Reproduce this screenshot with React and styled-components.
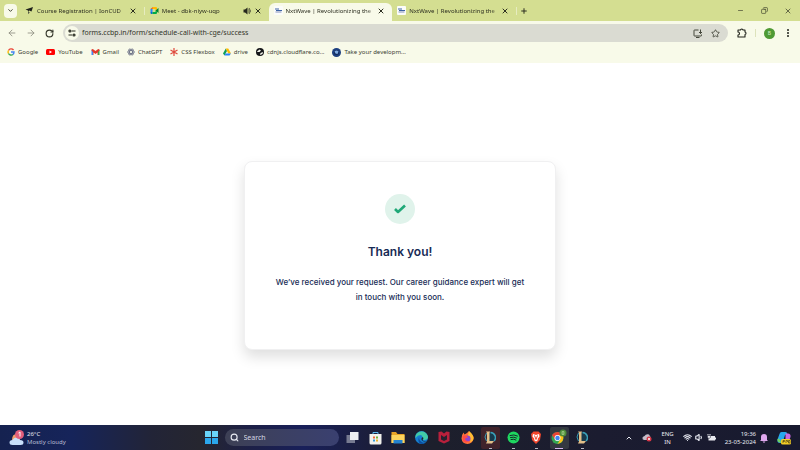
import React from "react";
import styled, { createGlobalStyle } from "styled-components";
import { ArrowLeft, ArrowRight, RotateCw, Star, X, Plus, Minus, ChevronDown, ChevronUp, Search, Wifi, Volume1, Copy } from "lucide-react";

const GlobalStyle = createGlobalStyle`
  * { box-sizing: border-box; }
  html, body { margin: 0; }
  body { font-family: "Noto Sans", "Open Sans", sans-serif; background: #fff; }
  button, input { font: inherit; color: inherit; border: 0; padding: 0; margin: 0; background: none; outline: none; }
  a { color: inherit; text-decoration: none; }
  svg { display: block; flex: none; }
`;

const Screen = styled.div`
  min-height: 100vh;
  display: flex;
  flex-direction: column;
`;

const TabStrip = styled.header`
  height: 21px;
  display: flex;
  align-items: center;
  background: #d4de91;
  color: #2c2e20;
  padding: 0 4px;
`;

const TabSearch = styled.button`
  flex: none;
  width: 13px;
  height: 14px;
  border-radius: 4px;
  background: #f8fae9;
  display: grid;
  place-items: center;
  margin-right: 3px;
`;

const Tabs = styled.nav`
  display: flex;
  flex: 0 1 496px;
  min-width: 0;
  align-self: stretch;
`;

const Tab = styled.div`
  flex: 1 1 0;
  min-width: 0;
  display: flex;
  align-items: center;
  gap: 3px;
  padding: 0 7px 0 5px;
  margin-top: ${(p) => (p.$active ? "3px" : "0")};
  padding-bottom: ${(p) => (p.$active ? "3px" : "0")};
  border-radius: ${(p) => (p.$active ? "6px 6px 0 0" : "0")};
  background: ${(p) => (p.$active ? "#f8fae9" : "transparent")};
`;

const TabTitle = styled.button`
  flex: 1;
  min-width: 0;
  text-align: left;
  font-size: 6px;
  line-height: 12px;
  white-space: nowrap;
  overflow: hidden;
  mask-image: linear-gradient(to right, #000 92%, transparent);
`;

const IconButton = styled.button`
  flex: none;
  display: grid;
  place-items: center;
  width: ${(p) => p.$w || 8}px;
  height: 14px;
  color: ${(p) => p.$color || "inherit"};
`;

const Divider = styled.span`
  flex: none;
  align-self: center;
  width: 1px;
  height: 8px;
  background: ${(p) => p.$color || "#e6ecc0"};
`;

const WindowControls = styled.div`
  margin-left: auto;
  display: flex;
  gap: 16px;
  padding-right: 4px;
`;

const Toolbar = styled.div`
  height: 22px;
  padding: 2px 7px 0 7px;
  display: flex;
  align-items: center;
  background: #f8fae9;
  color: #333529;
`;

const NavButtons = styled.div`
  display: flex;
  gap: 10px;
  margin-right: 9px;
`;

const Address = styled.label`
  flex: 1;
  min-width: 0;
  height: 18px;
  border-radius: 9px;
  background: #dadbd2;
  display: flex;
  align-items: center;
  gap: 3px;
  padding: 0 6px 0 2px;
`;

const SiteInfo = styled.span`
  width: 14px;
  height: 14px;
  border-radius: 50%;
  background: #f8fae9;
  display: grid;
  place-items: center;
`;

const AddressInput = styled.input`
  flex: 1;
  min-width: 0;
  font-size: 7px;
  line-height: 14px;
`;

const ToolbarEnd = styled.div`
  display: flex;
  align-items: center;
  gap: 8px;
  margin-left: 9px;
`;

const Avatar = styled.button`
  width: 11px;
  height: 11px;
  border-radius: 50%;
  background: #4f9a35;
  color: #dcefc9;
  font-size: 5px;
  line-height: 11px;
  text-align: center;
`;

const Bookmarks = styled.nav`
  height: 20px;
  padding: 0 7px 2px;
  display: flex;
  align-items: center;
  gap: 8px;
  background: #f8fae9;
  color: #3b3d33;
`;

const Bookmark = styled.a`
  display: flex;
  align-items: center;
  gap: 3px;
  font-size: 6px;
  line-height: 12px;
  white-space: nowrap;
`;

const Page = styled.main`
  flex: 1;
  display: flex;
  align-items: center;
  justify-content: center;
  padding: 24px;
  background: #fff;
`;

const Card = styled.section`
  width: 312px;
  max-width: 100%;
  margin-top: 22px;
  padding: 32px 28px 44px;
  border: 1px solid #f0f0f1;
  border-radius: 8px;
  background: #fff;
  box-shadow: 0 7px 14px rgba(0, 0, 0, 0.13);
  display: flex;
  flex-direction: column;
  align-items: center;
  text-align: center;
  color: #172b55;
`;

const CheckBadge = styled.div`
  width: 30px;
  height: 30px;
  border-radius: 50%;
  background: #e0f3eb;
  display: grid;
  place-items: center;
`;

const Heading = styled.h1`
  margin: 18px 0 13px;
  font: 600 12px/20px Inter, sans-serif;
`;

const Message = styled.p`
  margin: 0;
  font: 500 8px/15px Inter, sans-serif;
`;

const Taskbar = styled.footer`
  height: 25px;
  display: grid;
  grid-template-columns: 1fr auto 1fr;
  align-items: center;
  padding: 0 9px;
  color: #e8eaf2;
  background: linear-gradient(to right, #152250 0, #16245a 9%, #222437 19%, #26262f 25%, #1d2046 31%, #19205a 38%, #1b1e3c 46%, #1d1f2c 54%, #1b1c30 75%, #181a2f 100%);
`;

const Weather = styled.button`
  justify-self: start;
  display: flex;
  align-items: center;
  gap: 3px;
  text-align: left;
  font-size: 6px;
  line-height: 8px;
`;

const WeatherText = styled.span`
  display: flex;
  flex-direction: column;
`;

const Dim = styled.span`
  color: #b7bdd2;
`;

const Apps = styled.div`
  display: flex;
  align-items: center;
  gap: 4px;
  margin-right: 7px;
`;

const SearchBox = styled.label`
  width: 114px;
  height: 17px;
  border-radius: 9px;
  background: linear-gradient(to right, #3d4055, #3a4070);
  display: flex;
  align-items: center;
  gap: 5px;
  padding: 0 5px;
`;

const SearchInput = styled.input`
  flex: 1;
  min-width: 0;
  font-size: 7px;
  line-height: 12px;
  &::placeholder { color: #d3d6e2; opacity: 1; }
`;

const AppButton = styled.button`
  width: 19px;
  height: 22px;
  border-radius: 2px;
  display: grid;
  place-items: center;
  position: relative;
  background: ${(p) => p.$tint || "transparent"};
  &::after {
    content: "";
    display: ${(p) => (p.$run ? "block" : "none")};
    position: absolute;
    bottom: 0;
    left: 50%;
    margin-left: calc(${(p) => p.$run || 0}px / -2);
    width: ${(p) => p.$run || 0}px;
    height: 1px;
    background: ${(p) => (p.$run > 4 ? "#d6b8ee" : "#b8b8c2")};
  }
`;

const Tray = styled.div`
  justify-self: end;
  display: flex;
  align-items: center;
  gap: 9px;
  font-size: 6px;
  line-height: 8px;
`;

const TrayGroup = styled.div`
  display: flex;
  align-items: center;
  gap: 4px;
`;

const TrayButton = styled.button`
  display: flex;
  align-items: center;
  gap: 3px;
`;

const TrayText = styled.button`
  display: flex;
  flex-direction: column;
  align-items: ${(p) => p.$align || "center"};
`;

const GradCap = () => (
  <svg width="9" height="9" viewBox="0 0 18 18"><path d="M1 7 16 2 13 11 8 9 6 13 6 9Z" fill="#20221c" /><path d="M6 12v4l4-3" fill="#45483c" /></svg>
);
const Meet = () => (
  <svg width="9" height="9" viewBox="0 0 18 18"><path d="M1 6 6 2v4Z" fill="#e94235" /><path d="M1 6h4v6H1Z" fill="#2684fc" /><path d="M1 12h4v4H3q-2 0-2-2Z" fill="#0066da" /><path d="M5 2h7q2 0 2 2v3l-3 2V6H5Z" fill="#ffba00" /><path d="M5 12h6V9l3 2v3q0 2-2 2H5Z" fill="#00ac47" /><path d="m11 9 6-5v10Z" fill="#00832d" /></svg>
);
const Nxt = () => (
  <svg width="9" height="9" viewBox="0 0 18 18"><rect width="18" height="18" rx="2" fill="#fbfcfa" /><path d="M2 6h8M4 9h12" stroke="#3d64a6" strokeWidth="2" /><path d="M3 12h12" stroke="#8390bb" strokeWidth="2" /></svg>
);
const Sound = () => (
  <svg width="8" height="8" viewBox="0 0 16 16"><path d="M1 5h3l5-4v14l-5-4H1Z" fill="#25271c" /><path d="M11 5q3 3 0 6m1-9q6 6 0 12" fill="none" stroke="#25271c" strokeWidth="1.500" /></svg>
);
const Tune = () => (
  <svg width="8" height="8" viewBox="0 0 16 16" fill="none" stroke="#26281f" strokeWidth="2.400"><circle cx="4" cy="4" r="2" /><path d="M8 4h7M1 12h7" /><circle cx="12" cy="12" r="2" /></svg>
);
const Install = () => (
  <svg width="10" height="9" viewBox="0 0 20 18" fill="none" stroke="#333529" strokeWidth="1.800"><path d="M11 2H3q-1 0-1 1v10q0 1 1 1h13q1 0 1-1v-2M6 17h7M15 1v8m-3-3 3 3 3-3" /></svg>
);
const Puzzle = () => (
  <svg width="10" height="10" viewBox="0 0 20 20" fill="none" stroke="#20221b" strokeWidth="2.200"><path d="M2 4h5q0-2 2.500-2T12 4h4v4q2 0 2 2.500T16 13v5H2v-4q3 0 3-3T2 8Z" strokeLinejoin="round" /></svg>
);
const Dots = () => (
  <svg width="4" height="10" viewBox="0 0 4 10" fill="#20221b"><circle cx="2" cy="2" r="1" /><circle cx="2" cy="5" r="1" /><circle cx="2" cy="8" r="1" /></svg>
);
const GoogleG = () => (
  <svg width="8" height="8" viewBox="0 0 16 16" fill="none" strokeWidth="2.800"><path d="M13 4A6 6 0 0 0 3 5" stroke="#ea4335" /><path d="M3 5a6 6 0 0 0 0 6" stroke="#fbbc05" /><path d="M3 11a6 6 0 0 0 9 2" stroke="#34a853" /><path d="M8 8h6q0 3-2 5" stroke="#4285f4" /></svg>
);
const YouTube = () => (
  <svg width="9" height="8" viewBox="0 0 18 16"><rect y="2" width="18" height="12" rx="3" fill="#f00" /><path d="m7 5 5 3-5 3Z" fill="#fff" /></svg>
);
const Gmail = () => (
  <svg width="9" height="8" viewBox="0 0 18 16"><path d="M1 4h3v10H1Z" fill="#4285f4" /><path d="M14 4h3v10h-3Z" fill="#34a853" /><path d="M1 3q2-2 4 0l4 3 4-3q2-2 4 0v2l-3 3v6h-1V9l-4 3-4-3v5H4V8L1 5Z" fill="#e2382d" /></svg>
);
const Gpt = () => (
  <svg width="8" height="8" viewBox="0 0 16 16" fill="none" stroke="#62677f" strokeWidth="1.500"><ellipse cx="8" cy="8" rx="7" ry="3" /><ellipse cx="8" cy="8" rx="7" ry="3" transform="rotate(60 8 8)" /><ellipse cx="8" cy="8" rx="7" ry="3" transform="rotate(120 8 8)" /></svg>
);
const Asterisk = () => (
  <svg width="8" height="8" viewBox="0 0 16 16" stroke="#df4a3e" strokeWidth="2.400"><path d="M8 0v16M1 4l14 8M1 12l14-8" /></svg>
);
const Drive = () => (
  <svg width="8" height="8" viewBox="0 0 16 16"><path d="M5.500 1 0 11l3 4 5-9Z" fill="#0f9d58" /><path d="M5.500 1h5L16 11h-5.500Z" fill="#ffba00" /><path d="M5 11h11l-3 4H3Z" fill="#2684fc" /></svg>
);
const Globe = () => (
  <svg width="8" height="8" viewBox="0 0 16 16"><circle cx="8" cy="8" r="8" fill="#15171a" /><path d="m2 7 5-4 3 2-3 3H3Zm6 7 1-4 5-2-1 4Z" fill="#f5f6ed" /></svg>
);
const BlueBadge = () => (
  <svg width="9" height="9" viewBox="0 0 18 18"><circle cx="9" cy="9" r="9" fill="#1d3f80" /><circle cx="9" cy="9" r="5" fill="#122b5c" /><path d="M5 7q4-4 8 0l-2 5-4-1Z" fill="#7faae0" /></svg>
);
const CheckMark = () => (
  <svg width="12" height="10" viewBox="0 0 12 10" fill="none" stroke="#20a878" strokeWidth="2.600" strokeLinejoin="round"><path d="m1 5 3 3 7-6.500" /></svg>
);
const CloudIcon = () => (
  <svg width="15" height="16" viewBox="0 0 30 32"><path d="M6 20q0-12 9-12 5 1 6 12Z" fill="#f2a06d" /><path d="M7 30q-6 0-6-5t6-5q2-5 8-5t7 5q7 0 7 5t-6 5Z" fill="#c9e0fa" /><circle cx="21" cy="9" r="9" fill="#e25f7c" /><path d="m19 6 3-2v9" stroke="#fff" strokeWidth="2" fill="none" /></svg>
);
const Windows = () => (
  <svg width="13" height="13" viewBox="0 0 26 26"><path d="M0 0h12v12H0ZM14 0h12v12H14Z" fill="#69d4fa" /><path d="M0 14h12v12H0ZM14 14h12v12H14Z" fill="#2ba7ed" /></svg>
);
const TaskView = () => (
  <svg width="13" height="13" viewBox="0 0 26 26"><path d="M1 8h17v16H1Z" fill="#777b91" /><path d="M8 2h17v16H8Z" fill="#eceef2" /></svg>
);
const Store = () => (
  <svg width="13" height="14" viewBox="0 0 26 28"><path d="M8 8V3h10v5" fill="none" stroke="#5bb7ed" strokeWidth="2" /><path d="M1 6h24v18q0 3-3 3H4q-3 0-3-3Z" fill="#f1f1ec" /><path d="M8 11h4v4H8Z" fill="#ed6238" /><path d="M14 11h4v4h-4Z" fill="#71af37" /><path d="M8 17h4v4H8Z" fill="#329bd9" /><path d="M14 17h4v4h-4Z" fill="#eab22d" /></svg>
);
const Explorer = () => (
  <svg width="14" height="13" viewBox="0 0 28 26"><path d="M1 2h9l3 4h14v18H1Z" fill="#e8a326" /><path d="M1 8h26v16H1Z" fill="#fcd45d" /><path d="M5 18h18v7H5Z" fill="#2583cf" /></svg>
);
const Edge = () => (
  <svg width="13" height="13" viewBox="0 0 26 26"><circle cx="13" cy="13" r="13" fill="#167fd0" /><path d="M1 10C4-3 24-2 26 12q0 6-8 6-5-1-3-4 1-5-4-6-6 0-10 6Z" fill="#42cba6" /><path d="M9 10q-3 9 6 13 5 1 8-2-5 7-13 4-6-5-1-15" fill="#0c4fa0" /><path d="M13 18q-1-5 3-6 2 4-1 6 2 4 9 1-5 5-11-1Z" fill="#1b2035" /></svg>
);
const Shield = () => (
  <svg width="12" height="13" viewBox="0 0 24 26"><path d="m1 2 6-1 5 4 5-4 6 1v18l-11 5L1 20Z" fill="#b8203c" /><path d="M6 8v9l6 3 6-3V8l-6 4Z" fill="#25202e" /></svg>
);
const Firefox = () => (
  <svg width="13" height="13" viewBox="0 0 26 26"><path d="M16 0q1 4 5 6 5 5 4 10-2 9-12 10Q2 25 1 15 1 8 5 3l2 4q5-2 9-7Z" fill="#ff7139" /><path d="M16 0q10 8 9 16-2 6-7 7 3-8-4-14Z" fill="#ffbd32" /><circle cx="13" cy="15" r="6" fill="#8c46cf" /><path d="M3 10q8-4 11 3-5 0-6 3 1 5 7 4-6 6-11 0Z" fill="#ff4b48" /></svg>
);
const League = () => (
  <svg width="12" height="14" viewBox="0 0 24 28"><path d="M10 3a10 10 0 0 1 10 17H10Z" fill="#173a4c" /><path d="M13 3a10 10 0 0 1 7 17" fill="none" stroke="#3aa0b8" strokeWidth="3" /><path d="M5 4q-6 8 0 16" fill="none" stroke="#3aa0b8" strokeWidth="2" /><path d="M4 1h8l-1 3v16h9l-4 5H4l2-4V4Z" fill="#e2c08a" /></svg>
);
const Spotify = () => (
  <svg width="13" height="13" viewBox="0 0 26 26"><circle cx="13" cy="13" r="12" fill="#1ed760" /><path d="M6 9q8-3 15 1M7 13q7-2 12 1M8 17q6-2 10 1" fill="none" stroke="#16272a" strokeWidth="2" strokeLinecap="round" /></svg>
);
const Brave = () => (
  <svg width="12" height="13" viewBox="0 0 24 26"><path d="m7 1 10 0 5 5-2 12-8 8-8-8L2 6Z" fill="#f2462c" /><path d="m6 6 6 2 6-2 1 5-4 5 1 2-4 3-4-3 1-2-4-5Z" fill="#fff" /><path d="m9 9 3 8 3-8" fill="none" stroke="#ed452e" strokeWidth="2" /></svg>
);
const Chrome = () => (
  <svg width="16" height="17" viewBox="0 0 32 34"><circle cx="13" cy="18" r="12" fill="#34a853" /><path d="M2 12Q7 5 14 6q9 1 11 9H13l-4 8Z" fill="#e94535" /><path d="M13 13h11q4 13-11 17l6-10Z" fill="#fbc116" /><circle cx="13" cy="18" r="6" fill="#fff" /><circle cx="13" cy="18" r="4.500" fill="#4285f4" /><circle cx="24" cy="8" r="7" fill="#4d8c3a" /><path d="M22 5h4v6h-4Zm0 3h4" fill="none" stroke="#a6cd89" strokeWidth="1.500" /></svg>
);
const TrayCloud = () => (
  <svg width="10" height="9" viewBox="0 0 20 18"><path d="M4 14q-4-1-3-5 2-3 4-3 3-5 9-3l3 5v6Z" fill="#c4bcc9" /><circle cx="14" cy="12" r="5" fill="#d83747" /><path d="m12 10 4 4m0-4-4 4" stroke="#fff" strokeWidth="1.500" /></svg>
);
const Battery = () => (
  <svg width="9" height="9" viewBox="0 0 18 18" fill="#e8e9ef"><path d="M3 6h13v9H3Z" /><path d="M16 9h2v4h-2ZM1 2h2v3H1Zm4 0h2v3H5Z" /><path d="M1 5h6v4l-3 2-3-2Z" stroke="#1b1d30" /></svg>
);
const Bell = () => (
  <svg width="8" height="10" viewBox="0 0 16 20"><path d="M2 14V8q0-6 6-6t6 6v6l2 2H0Z" fill="#dfa8ef" /><path d="M5 17h6l-3 3Z" fill="#dfa8ef" /></svg>
);
const Copilot = () => (
  <svg width="14" height="14" viewBox="0 0 28 28"><path d="M9 2h8q3 0 4 4l-5 2-5 16H6q-6 0-5-7L5 6q1-4 4-4Z" fill="#26a9ee" /><path d="M17 5h5q6 0 5 7l-4 10q-1 4-5 4h-6q4-2 5-8Z" fill="#c969df" /><path d="m4 15 5 8H5q-5-1-4-7Z" fill="#72d05e" /><rect x="8" y="16" width="20" height="11" rx="3" fill="#f4cd26" /><path d="M12 24v-5h3v2h-3m6 3v-5h3v3m2 2h3v-5h-3v5" fill="none" stroke="#453a13" strokeWidth="1.300" /></svg>
);

const tabs = [
  { title: "Course Registration | IonCUD", Icon: GradCap, divided: true },
  { title: "Meet - dbk-niyw-uqp", Icon: Meet, sound: true },
  { title: "NxtWave | Revolutionizing the", Icon: Nxt, active: true },
  { title: "NxtWave | Revolutionizing the", Icon: Nxt },
];

const bookmarks = [
  ["Google", GoogleG],
  ["YouTube", YouTube],
  ["Gmail", Gmail],
  ["ChatGPT", Gpt],
  ["CSS Flexbox", Asterisk],
  ["drive", Drive],
  ["cdnjs.cloudflare.co...", Globe],
  ["Take your developm...", BlueBadge],
];

const apps = [
  { name: "Task view", Icon: TaskView },
  { name: "Microsoft Store", Icon: Store },
  { name: "File Explorer", Icon: Explorer },
  { name: "Edge", Icon: Edge },
  { name: "McAfee", Icon: Shield },
  { name: "Firefox", Icon: Firefox },
  { name: "League of Legends", Icon: League, tint: "#40232b", run: 3 },
  { name: "Spotify", Icon: Spotify, run: 3 },
  { name: "Brave", Icon: Brave, run: 3 },
  { name: "Chrome", Icon: Chrome, tint: "#343941", run: 8 },
  { name: "League client", Icon: League, run: 3 },
];

export default function App() {
  return (
    <Screen>
      <GlobalStyle />
      <TabStrip>
        <TabSearch aria-label="Search tabs"><ChevronDown size={7} strokeWidth={3} /></TabSearch>
        <Tabs aria-label="Tabs">
          {tabs.map(({ title, Icon, active, sound, divided }, i) => (
            <React.Fragment key={i}>
              <Tab $active={active}>
                <Icon />
                <TabTitle>{title}</TabTitle>
                {sound && <IconButton aria-label="Mute tab"><Sound /></IconButton>}
                <IconButton aria-label="Close tab"><X size={8} strokeWidth={3} /></IconButton>
              </Tab>
              {divided && <Divider />}
            </React.Fragment>
          ))}
        </Tabs>
        <Divider />
        <IconButton $w={14} aria-label="New tab"><Plus size={8} strokeWidth={3} /></IconButton>
        <WindowControls>
          <IconButton aria-label="Minimize"><Minus size={7} strokeWidth={2} /></IconButton>
          <IconButton aria-label="Restore"><Copy size={7} strokeWidth={2} transform="scale(-1 1)" /></IconButton>
          <IconButton aria-label="Close"><X size={8} strokeWidth={2} /></IconButton>
        </WindowControls>
      </TabStrip>
      <Toolbar>
        <NavButtons>
          <IconButton $w={9} $color="#8b8d80" aria-label="Back"><ArrowLeft size={10} /></IconButton>
          <IconButton $w={9} $color="#8b8d80" aria-label="Forward"><ArrowRight size={10} /></IconButton>
          <IconButton $w={9} aria-label="Reload"><RotateCw size={9} strokeWidth={3} /></IconButton>
        </NavButtons>
        <Address>
          <SiteInfo><Tune /></SiteInfo>
          <AddressInput aria-label="Address" defaultValue="forms.ccbp.in/form/schedule-call-with-cge/success" />
          <IconButton $w={14} aria-label="Install app"><Install /></IconButton>
          <IconButton $w={14} aria-label="Bookmark page"><Star size={9} /></IconButton>
        </Address>
        <ToolbarEnd>
          <IconButton $w={10} aria-label="Extensions"><Puzzle /></IconButton>
          <Divider $color="#dde2bb" />
          <Avatar aria-label="Profile">B</Avatar>
          <IconButton $w={10} aria-label="Menu"><Dots /></IconButton>
        </ToolbarEnd>
      </Toolbar>
      <Bookmarks aria-label="Bookmarks">
        {bookmarks.map(([name, Icon]) => (
          <Bookmark key={name} href="#"><Icon />{name}</Bookmark>
        ))}
      </Bookmarks>
      <Page>
        <Card>
          <CheckBadge><CheckMark /></CheckBadge>
          <Heading>Thank you!</Heading>
          <Message>We’ve received your request. Our career guidance expert will get in touch with you soon.</Message>
        </Card>
      </Page>
      <Taskbar>
        <Weather>
          <CloudIcon />
          <WeatherText><span>26°C</span><Dim>Mostly cloudy</Dim></WeatherText>
        </Weather>
        <Apps>
          <AppButton aria-label="Start"><Windows /></AppButton>
          <SearchBox><Search size={9} strokeWidth={3} /><SearchInput aria-label="Search" placeholder="Search" /></SearchBox>
          {apps.map(({ name, Icon, tint, run }) => (
            <AppButton key={name} aria-label={name} $tint={tint} $run={run}><Icon /></AppButton>
          ))}
        </Apps>
        <Tray>
          <TrayButton aria-label="Hidden icons"><ChevronUp size={8} strokeWidth={3} /></TrayButton>
          <TrayButton aria-label="Cloud sync"><TrayCloud /></TrayButton>
          <TrayText><span>ENG</span><span>IN</span></TrayText>
          <TrayButton aria-label="Network, volume and battery"><Wifi size={9} strokeWidth={3} /><Volume1 size={9} strokeWidth={3} /><Battery /></TrayButton>
          <TrayGroup>
            <TrayText $align="flex-end"><span>19:36</span><span>23-05-2024</span></TrayText>
            <TrayButton aria-label="Notifications"><Bell /></TrayButton>
          </TrayGroup>
          <TrayButton aria-label="Copilot"><Copilot /></TrayButton>
        </Tray>
      </Taskbar>
    </Screen>
  );
}
